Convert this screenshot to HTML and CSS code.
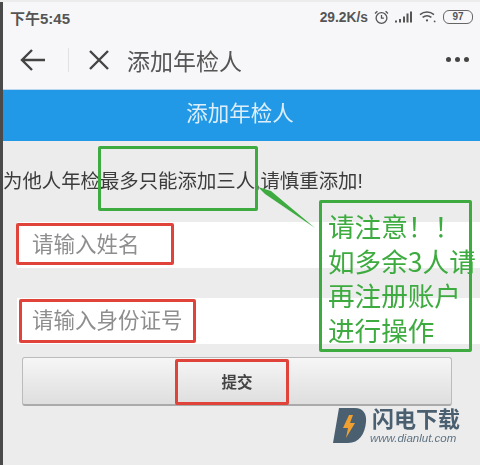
FILE: index.html
```html
<!DOCTYPE html>
<html lang="zh-CN">
<head>
    <meta charset="UTF-8">
    <meta name="viewport" content="width=device-width, initial-scale=1.0">
    <title>添加年检人</title>
    <link rel="stylesheet" href="styles.css">
</head>
<body>

    <div class="screen">
        <div class="status-bar">
            <span class="status-time">下午5:45</span>
            <div class="status-right">
                <span class="status-speed">29.2K/s</span>
                <svg class="icon-alarm" width="15" height="15" viewBox="0 0 15 15" fill="none" stroke="#555" stroke-width="1.3">
                    <circle cx="7.5" cy="8" r="5.4"/>
                    <path d="M7.5 5v3.2h2.4M1 3.4 3.4 1.2M14 3.4 11.6 1.2"/>
                </svg>
                <svg class="icon-signal" width="18" height="12" viewBox="0 0 18 12" fill="#555">
                    <rect x="0" y="9.5" width="2" height="2"/>
                    <rect x="4" y="8" width="2" height="3.5"/>
                    <rect x="8" y="5.5" width="2" height="6"/>
                    <rect x="11.5" y="2.5" width="2" height="9"/>
                    <rect x="15" y="0.5" width="2" height="11"/>
                </svg>
                <svg class="icon-wifi" width="17" height="12" viewBox="0 0 17 12" fill="none" stroke="#555" stroke-width="1.5">
                    <path d="M1 3.6C5.2 0.2 10.8 0.2 15 3.6M3.6 6.4C6.2 4.4 9.8 4.4 12.4 6.4"/>
                    <circle cx="8" cy="9.4" r="1.1" fill="#555" stroke="none"/>
                    <circle cx="15.6" cy="10.4" r="0.9" fill="#555" stroke="none"/>
                </svg>
                <span class="battery">97</span>
            </div>
        </div>

        <div class="navbar">
            <svg class="icon-back" width="28" height="24" viewBox="0 0 28 24" fill="none" stroke="#444" stroke-width="2.4">
                <path d="M26 12H3M13 2 3 12l10 10"/>
            </svg>
            <span class="nav-divider"></span>
            <svg class="icon-close" width="22" height="22" viewBox="0 0 22 22" fill="none" stroke="#444" stroke-width="2.4">
                <path d="M2 2l18 18M20 2 2 20"/>
            </svg>
            <span class="nav-title">添加年检人</span>
            <span class="nav-more"><i></i><i></i><i></i></span>
        </div>

        <div class="banner">添加年检人</div>

        <div class="content">
            <p class="notice">为他人年检最多只能添加三人,请慎重添加!</p>
            <div class="field"><span>请输入姓名</span></div>
            <div class="field"><span>请输入身份证号</span></div>
            <button class="submit">提交</button>
        </div>
    </div>

    <!-- markup drawn on top of the screenshot -->
    <div class="mark mark-limit"></div>
    <div class="mark-red mark-name"></div>
    <div class="mark-red mark-id"></div>
    <div class="mark-red mark-submit"></div>
    <svg class="mark-arrow" width="62" height="44" viewBox="0 0 62 44">
        <path d="M2 0 15 4 59 41 9 7Z" fill="#3dab3f"/>
    </svg>
    <div class="mark callout">请注意！！<br>如多余3人请<br>再注册账户<br>进行操作</div>

    <div class="logo">
        <svg width="34" height="36" viewBox="0 0 34 36">
            <path d="M6 0H22C30 0 34 6 33 14C32 26 26 35 15 35H0Z" fill="#4a5f70"/>
            <path d="M16 7 10 20H15L13 30 22 15H17L20 7Z" fill="#f0a030"/>
        </svg>
        <div class="logo-text">
            <span class="logo-name">闪电下载</span>
            <span class="logo-url">www.dianlut.com</span>
        </div>
    </div>

</body>
</html>
```

FILE: styles.css
```css
/* Phone screenshot with annotations on top */
html, body {
    margin: 0;
    padding: 0;
}
body {
    position: relative;
    width: 480px;
    height: 465px;
    overflow: hidden;
    background-color: #ececec;
    font-family: "Liberation Sans", "Noto Sans CJK SC", sans-serif;
    filter: blur(0.5px);
}
.screen {
    display: flex;
    flex-direction: column;
    height: 463px;
    margin-top: 2px;
    border-left: 3px solid #4a4a4a;
    box-sizing: border-box;
}
.status-bar {
    display: flex;
    justify-content: space-between;
    align-items: center;
    height: 30px;
    padding: 0 7px 0 7px;
    background-color: #f7f7f9;
    color: #555;
}
.status-time {
    font-size: 15px;
    font-weight: bold;
}
.status-right {
    display: flex;
    align-items: center;
    gap: 6px;
}
.status-speed {
    font-size: 13.8px;
    font-weight: bold;
}
.battery {
    width: 28px;
    height: 12px;
    border: 1px solid #666;
    border-radius: 6px;
    font-size: 10px;
    font-weight: bold;
    line-height: 12px;
    text-align: center;
    margin-left: 1px;
}
.navbar {
    display: flex;
    align-items: center;
    height: 58px;
    padding: 0 11px 2px 16px;
    box-sizing: border-box;
    background-color: #f7f7f9;
    border-bottom: 1px solid #b9d7ee;
}
.nav-divider {
    width: 1px;
    height: 24px;
    margin: 0 19px 0 21px;
    background-color: #e2e2e4;
}
.nav-title {
    margin-left: 17px;
    font-size: 23px;
    color: #555;
}
.nav-more {
    display: flex;
    gap: 4px;
    margin-left: auto;
}
.nav-more i {
    width: 5px;
    height: 5px;
    border-radius: 50%;
    background-color: #444;
}
.banner {
    height: 51px;
    line-height: 49px;
    padding-right: 3px;
    background-color: #2299e6;
    color: #dceefa;
    font-size: 21.5px;
    text-align: center;
}
.content {
    flex: 1;
}
.notice {
    margin: 28px 0 0 0;
    height: 53px;
    font-size: 19.4px;
    line-height: 24px;
    color: #3c3c3c;
    white-space: nowrap;
}
.field {
    height: 46px;
    margin: 0 0 30px 14px;
    padding-left: 15px;
    background-color: #fff;
    color: #8e8e8e;
    font-size: 21.5px;
    line-height: 46px;
}
.submit {
    display: block;
    width: 430px;
    height: 49px;
    margin: -17px 0 0 19px;
    border: 1px solid #bbb;
    border-bottom: 2px solid #aaa;
    border-radius: 3px;
    background: linear-gradient(#f6f6f6, #dedede);
    color: #444;
    font-family: inherit;
    font-size: 15.5px;
    font-weight: bold;
}

/* annotations */
.mark {
    position: absolute;
    box-sizing: border-box;
    border: 3px solid #3dab3f;
    border-radius: 2px;
}
.mark-limit {
    left: 98px;
    top: 146px;
    width: 160px;
    height: 65px;
}
.mark-red {
    position: absolute;
    box-sizing: border-box;
    border: 3px solid #e0433a;
    border-radius: 2px;
}
.mark-name {
    left: 16px;
    top: 223px;
    width: 158px;
    height: 42px;
}
.mark-id {
    left: 19px;
    top: 299px;
    width: 177px;
    height: 44px;
}
.mark-submit {
    left: 175px;
    top: 359px;
    width: 114px;
    height: 46px;
}
.mark-arrow {
    position: absolute;
    left: 256px;
    top: 187px;
}
.callout {
    left: 319px;
    top: 200px;
    width: 153px;
    height: 152px;
    padding: 6px 0 0 6px;
    color: #3dab3f;
    font-family: "Noto Sans CJK JP", sans-serif;
    font-size: 26.6px;
    line-height: 34.5px;
    white-space: nowrap;
}
.logo {
    position: absolute;
    left: 333px;
    top: 408px;
    display: flex;
    gap: 3px;
}
.logo-text {
    display: flex;
    flex-direction: column;
}
.logo-name {
    font-size: 22px;
    font-weight: bold;
    line-height: 24px;
    color: #4a5f70;
    margin-left: 2px;
}
.logo-url {
    font-size: 11.5px;
    font-style: italic;
    line-height: 13px;
    color: #5f7383;
    white-space: nowrap;
}
```
